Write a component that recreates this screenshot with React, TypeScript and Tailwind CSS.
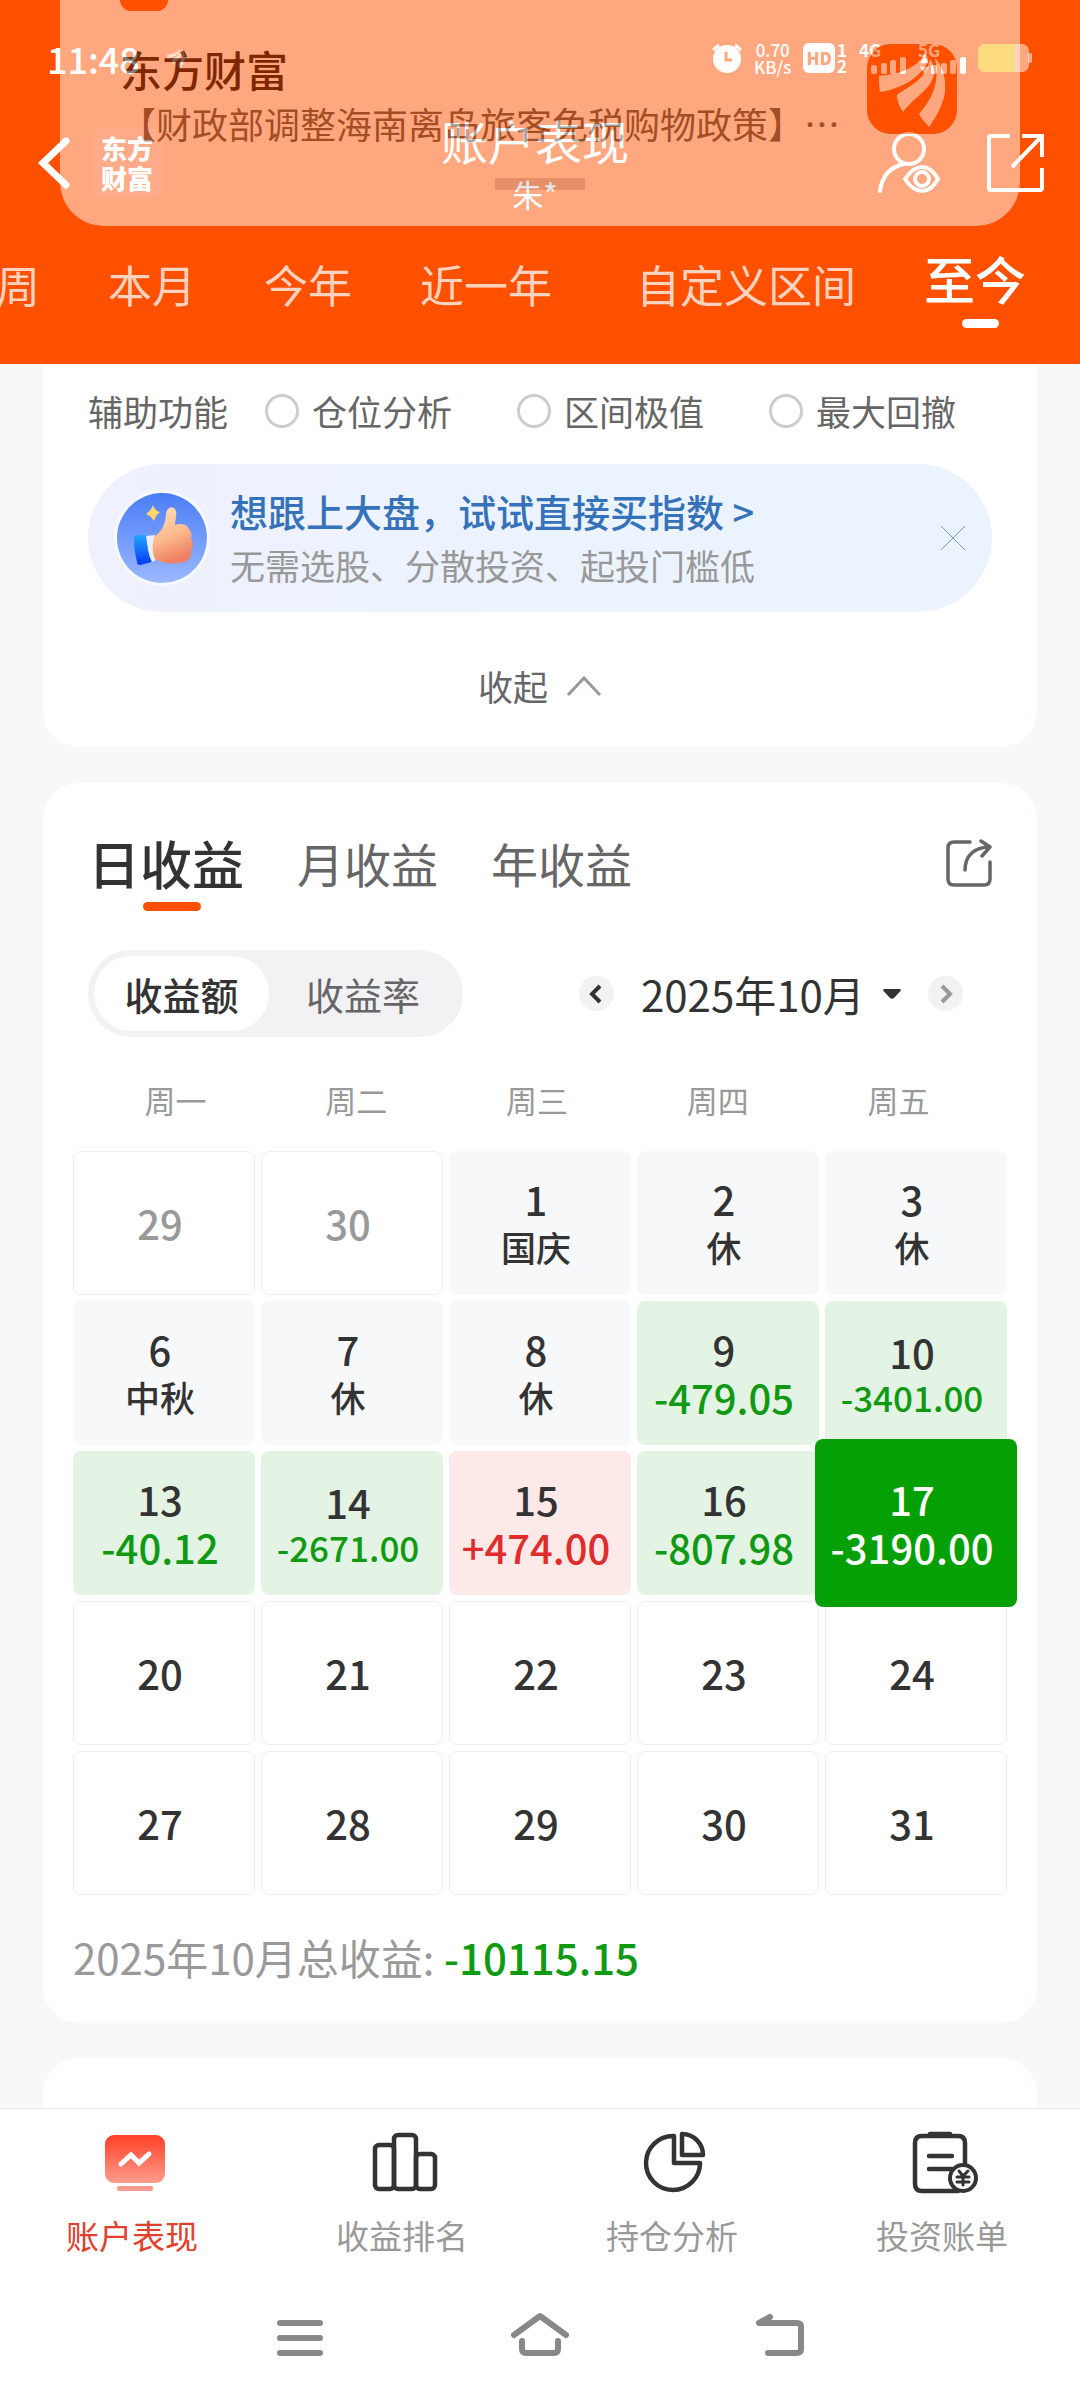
import { useState } from "react";
import clsx from "clsx";

type Tone = "muted" | "plain" | "holiday" | "loss" | "gain";

interface Day {
  date: number;
  tone: Tone;
  note?: string;
}

const ranges = ["本周", "本月", "今年", "近一年", "自定义区间", "至今"];
const helpers = ["仓位分析", "区间极值", "最大回撤"];
const periods = ["日收益", "月收益", "年收益"];
const weekdays = ["周一", "周二", "周三", "周四", "周五"];

const days: Day[] = [
  { date: 29, tone: "muted" },
  { date: 30, tone: "muted" },
  { date: 1, tone: "holiday", note: "国庆" },
  { date: 2, tone: "holiday", note: "休" },
  { date: 3, tone: "holiday", note: "休" },
  { date: 6, tone: "holiday", note: "中秋" },
  { date: 7, tone: "holiday", note: "休" },
  { date: 8, tone: "holiday", note: "休" },
  { date: 9, tone: "loss", note: "-479.05" },
  { date: 10, tone: "loss", note: "-3401.00" },
  { date: 13, tone: "loss", note: "-40.12" },
  { date: 14, tone: "loss", note: "-2671.00" },
  { date: 15, tone: "gain", note: "+474.00" },
  { date: 16, tone: "loss", note: "-807.98" },
  { date: 17, tone: "loss", note: "-3190.00" },
  { date: 20, tone: "plain" },
  { date: 21, tone: "plain" },
  { date: 22, tone: "plain" },
  { date: 23, tone: "plain" },
  { date: 24, tone: "plain" },
  { date: 27, tone: "plain" },
  { date: 28, tone: "plain" },
  { date: 29, tone: "plain" },
  { date: 30, tone: "plain" },
  { date: 31, tone: "plain" },
];

const cellTone: Record<Tone, string> = {
  muted: "border border-[#eeeeee] text-[#999999]",
  plain: "border border-[#eeeeee] text-[#333333]",
  holiday: "bg-[#f7f8fa] text-[#333333]",
  loss: "bg-[#e4f4e4] text-[#333333]",
  gain: "bg-[#fde9e8] text-[#333333]",
};

const noteTone: Record<Tone, string> = {
  muted: "",
  plain: "",
  holiday: "text-[#333333]",
  loss: "text-[#109a14]",
  gain: "text-[#e02c2c]",
};

const BrandMark = ({ className }: { className?: string }) => (
  <svg viewBox="0 0 90 90" className={className} aria-hidden="true">
    <path d="M12 32 C30 30 48 26 58 10 C60 12 61 14 61 17 C54 32 38 44 13 48 C12 43 12 37 12 32Z" />
    <path d="M63 15 C66 19 67 24 67 30 C64 46 48 52 36 68 C32 62 30 57 30 51 C40 43 60 36 63 15Z" />
    <path d="M68 14 C76 22 79 34 78 48 C76 62 68 74 62 83 C58 78 54 74 52 70 C62 58 74 42 68 14Z" />
  </svg>
);

const SignalBars = ({ className }: { className?: string }) => (
  <svg viewBox="0 0 35 17" className={className} fill="currentColor" aria-hidden="true">
    <rect x="0" y="8" width="6" height="9" rx="2" />
    <rect x="10" y="6" width="6" height="11" rx="2" />
    <rect x="19" y="3" width="6" height="14" rx="2" />
    <rect x="29" y="0" width="6" height="17" rx="2" />
  </svg>
);

const StatusBar = () => (
  <div className="flex items-center justify-between pt-[38px] pr-12 pl-[47px] text-white">
    <div className="flex items-center gap-6">
      <span className="text-[36px] leading-[40px] font-medium">11:48</span>
      <BrandMark className="h-6 w-6 fill-white/60" />
    </div>
    <div className="flex items-center gap-3">
      <svg viewBox="0 0 30 30" className="h-[30px] w-[30px]" fill="none" aria-hidden="true">
        <circle cx="15" cy="16" r="14" fill="white" />
        <path d="M1 7 L7 2 M29 7 L23 2" stroke="white" strokeWidth="3" />
        <path d="M14 9 V17 H20" stroke="#ff5000" strokeWidth="3" />
      </svg>
      <div className="text-center text-[17px] leading-[17px] font-medium">
        <div>0.70</div>
        <div>KB/s</div>
      </div>
      <div className="flex items-center gap-0.5">
        <span className="rounded-md bg-white px-[3px] text-[17px] leading-[30px] font-black text-[#ff5000]">HD</span>
        <div className="text-[17px] leading-[16px] font-bold">
          <div>1</div>
          <div>2</div>
        </div>
      </div>
      <div className="w-[47px]">
        <div className="text-[17px] leading-[15px] font-bold">4G</div>
        <SignalBars className="ml-3 h-[17px] w-[35px]" />
      </div>
      <div className="w-12">
        <div className="text-[17px] leading-[15px] font-bold">5G</div>
        <div className="flex items-end gap-0.5">
          <svg viewBox="0 0 10 20" className="-mt-1 ml-0.5 h-[18px] w-[9px]" fill="currentColor" aria-hidden="true">
            <path d="M5 0 L10 8 H0Z M5 20 L10 12 H0Z" />
          </svg>
          <SignalBars className="h-[17px] w-[35px]" />
        </div>
      </div>
      <svg viewBox="0 0 54 28" className="h-7 w-[54px]" aria-hidden="true">
        <rect width="51" height="28" rx="7" fill="white" fillOpacity="0.5" />
        <rect x="50" y="9" width="4" height="10" rx="1" fill="white" fillOpacity="0.5" />
        <path d="M7 0 H37 V28 H7 A7 7 0 0 1 0 21 V7 A7 7 0 0 1 7 0Z" fill="#fbb900" />
      </svg>
    </div>
  </div>
);

const TitleBar = () => (
  <div className="mt-9 grid grid-cols-[1fr_auto_1fr] items-center pr-9 pl-[26px] text-white">
    <div className="flex items-center gap-2.5">
      <button aria-label="返回">
        <svg viewBox="0 0 56 56" className="h-14 w-14" fill="none" stroke="white" strokeWidth="7" strokeLinecap="round">
          <path d="M40 6 L17 28 L40 50" />
        </svg>
      </button>
      <div className="rounded-xl bg-[#ff6a50]/20 px-[9px] py-[5px] text-[26px] leading-[30px] font-black">
        <div>东方</div>
        <div>财富</div>
      </div>
    </div>
    <div className="text-center">
      <h1 className="text-[47px] leading-[52px]">账户表现</h1>
      <p className="mt-2.5 text-[31px] leading-9">朱*</p>
    </div>
    <div className="flex items-center justify-end gap-[46px]">
      <button aria-label="查看账户">
        <svg viewBox="0 0 62 62" className="h-[62px] w-[62px]" fill="none" stroke="white" strokeWidth="4" strokeLinecap="round">
          <circle cx="31" cy="17" r="15" />
          <path d="M2 59 C4 44 12 35 26 32" />
          <path d="M27 47 C33 38 38 35 44 35 C50 35 55 38 60 47 C55 56 50 59 44 59 C38 59 33 56 27 47Z" />
          <circle cx="44" cy="47" r="7" />
        </svg>
      </button>
      <button aria-label="分享">
        <svg viewBox="0 0 58 60" className="h-[60px] w-[58px]" fill="none" stroke="white" strokeWidth="4">
          <path d="M24 3 H5 Q3 3 3 5 V55 Q3 57 5 57 H54 Q56 57 56 55 V35" />
          <path d="M36 3 H56 V24 M55 4 L26 34" />
        </svg>
      </button>
    </div>
  </div>
);

/* Heads-up message sliding away over the header */
const Notification = () => (
  <aside className="absolute inset-x-[60px] top-0 rounded-b-[44px] bg-white pb-9 opacity-50">
    <div className="flex items-start justify-between pr-[63px] pl-[60px]">
      <div className="min-w-0">
        <div className="h-[11px] w-12 rounded-b-[14px] bg-[#ff5000]" />
        <div className="mt-[30px] text-[42px] leading-[56px] font-medium text-black">东方财富</div>
        <p className="text-[36px] leading-[52px] text-[#4b4b4b]">【财政部调整海南离岛旅客免税购物政策】…</p>
        <div className="mt-[29px] ml-[375px] h-3 w-[90px] bg-[#cfcfcf]" />
      </div>
      <BrandMark className="mt-11 h-[90px] w-[90px] rounded-[24px] bg-[#ff5000] fill-white" />
    </div>
  </aside>
);

const RangeTabs = () => {
  const [active, setActive] = useState("至今");
  return (
    <nav className="flex justify-end gap-[68px] overflow-hidden pt-[34px] pr-[54px]">
      {ranges.map((range) => (
        <button
          key={range}
          onClick={() => setActive(range)}
          className={clsx(
            "flex shrink-0 flex-col items-center whitespace-nowrap",
            range === "近一年" && "mr-4",
            active === range ? "text-[51px] font-medium text-white" : "pt-1.5 text-[44px] text-[#ffd3bf]"
          )}
        >
          <span className="leading-[64px]">{range}</span>
          {active === range && <span className="mt-[9px] ml-3 h-[9px] w-[37px] rounded-full bg-white" />}
        </button>
      ))}
    </nav>
  );
};

const ThumbBadge = () => (
  <svg viewBox="0 0 96 96" className="h-24 w-24 shrink-0" aria-hidden="true">
    <defs>
      <linearGradient id="badge" x1="0" y1="0" x2="0" y2="1">
        <stop offset="0" stopColor="#4a7df6" />
        <stop offset="1" stopColor="#9bb8ff" />
      </linearGradient>
      <linearGradient id="hand" x1="0" y1="0" x2="0.3" y2="1">
        <stop offset="0" stopColor="#ffe0bb" />
        <stop offset="0.6" stopColor="#fdb98c" />
        <stop offset="1" stopColor="#ee8064" />
      </linearGradient>
      <linearGradient id="cuff" x1="0" y1="0" x2="0" y2="1">
        <stop offset="0" stopColor="#23a6ff" />
        <stop offset="1" stopColor="#0438f2" />
      </linearGradient>
    </defs>
    <circle cx="48" cy="48" r="48" fill="#f6faff" />
    <circle cx="48" cy="48" r="45" fill="url(#badge)" />
    <path d="M39 15 Q41 21 46 22 Q42 25 40 31 Q37 26 32 24 Q37 21 39 15Z" fill="#ffd76a" />
    <path d="M32 46 L41 45 L42 70 L36 73Z" fill="#e8eeff" />
    <path
      d="M40 47 C47 42 51 36 52 24 C53 16 60 15 62 21 C63 26 61 31 61 35 C67 33 73 34 75 39 C78 42 78 46 77 49 C80 53 79 58 77 61 C78 66 75 71 70 72 C60 75 47 73 41 69 C38 62 38 54 40 47Z"
      fill="url(#hand)"
    />
    <path d="M20 48 Q20 45 23 45 L32 45 C33 55 34 64 38 72 L26 75 Q23 75 23 72 C21 64 20 56 20 48Z" fill="url(#cuff)" />
  </svg>
);

const ToolsCard = () => {
  const [showBanner, setShowBanner] = useState(true);
  return (
    <section className="rounded-b-[36px] bg-white px-[45px] pt-6 pb-[38px] text-[35px] text-[#666666]">
      <div className="flex items-center leading-[46px]">
        <span className="mr-[37px]">辅助功能</span>
        <div className="flex gap-[65px]">
          {helpers.map((helper) => (
            <label key={helper} className="flex items-center gap-[13px]">
              <input
                type="radio"
                name="helper"
                className="h-[34px] w-[34px] appearance-none rounded-full border-[3px] border-[#cccccc] checked:border-[#ff5000]"
              />
              {helper}
            </label>
          ))}
        </div>
      </div>

      {showBanner && (
        <div className="mt-[30px] flex items-center rounded-full bg-linear-to-r from-[#eff1fd] to-[#ebf3ff] to-50% py-5 pr-[27px] pl-[26px]">
          <ThumbBadge />
          <a href="#index-fund" className="ml-5 flex-1">
            <div className="text-[38px] leading-[54px] font-medium text-[#3572ba]">想跟上大盘，试试直接买指数 &gt;</div>
            <div className="leading-[54px] text-[#999999]">无需选股、分散投资、起投门槛低</div>
          </a>
          <button aria-label="关闭" onClick={() => setShowBanner(false)}>
            <svg viewBox="0 0 24 24" className="h-6 w-6" stroke="#6c9ad2" strokeWidth="1">
              <path d="M0 0 L24 24 M24 0 L0 24" />
            </svg>
          </button>
        </div>
      )}

      <button className="mx-auto mt-[51px] flex items-center gap-[18px] leading-[46px]">
        收起
        <svg viewBox="0 0 36 22" className="h-[22px] w-9" fill="none" stroke="#999999" strokeWidth="3">
          <path d="M2 20 L18 3 L34 20" />
        </svg>
      </button>
    </section>
  );
};

const DayCell = ({ day, selected, onSelect }: { day: Day; selected: boolean; onSelect: () => void }) => {
  const long = !!day.note && day.note.length > 7 && !selected;
  return (
    <button
      onClick={onSelect}
      className={clsx(
        "flex flex-col items-center justify-center rounded-lg pr-2 text-[40px] leading-[48px] font-medium",
        selected ? "z-10 -mx-2.5 -my-3 bg-[#05a005] text-white" : cellTone[day.tone]
      )}
    >
      <span>{day.date}</span>
      {day.note && (
        <span
          className={clsx(
            !selected && noteTone[day.tone],
            long && "text-[35px] leading-[42px]",
            day.tone === "holiday" && "text-[35px]"
          )}
        >
          {day.note}
        </span>
      )}
    </button>
  );
};

const EarningsCard = () => {
  const [period, setPeriod] = useState("日收益");
  const [mode, setMode] = useState("收益额");
  const [selected, setSelected] = useState(14);

  return (
    <section className="mt-9 rounded-[36px] bg-white px-[30px] pt-[50px] pb-9">
      <div className="flex items-start justify-between px-[15px]">
        <div className="flex gap-[53px]">
          {periods.map((item) => (
            <button
              key={item}
              onClick={() => setPeriod(item)}
              className={clsx(
                "flex flex-col items-center",
                period === item ? "text-[52px] font-medium text-[#333333]" : "text-[47px] text-[#666666]"
              )}
            >
              <span className="leading-[60px]">{item}</span>
              <span className={clsx("mt-[9px] ml-3 h-[9px] w-[58px] rounded-full", period === item && "bg-[#ff5000]")} />
            </button>
          ))}
        </div>
        <button aria-label="分享收益" className="mt-1.5">
          <svg
            viewBox="0 0 46 48"
            className="h-12 w-[46px]"
            fill="none"
            stroke="#666666"
            strokeWidth="3.5"
            strokeLinecap="round"
            strokeLinejoin="round"
          >
            <path d="M24 3 H8 Q2 3 2 9 V40 Q2 46 8 46 H38 Q44 46 44 40 V23" />
            <path d="M19 31 C19 17 28 8 44 8 M35 2 L44 8 L36 17" />
          </svg>
        </button>
      </div>

      <div className="mt-[39px] flex items-center justify-between px-[15px]">
        <div className="flex rounded-full bg-[#f2f2f5] p-1.5 text-[38px] leading-[75px]">
          <button
            onClick={() => setMode("收益额")}
            className={clsx(
              "w-[175px] rounded-full",
              mode === "收益额" ? "bg-white font-medium text-[#333333]" : "text-[#666666]"
            )}
          >
            收益额
          </button>
          <button
            onClick={() => setMode("收益率")}
            className={clsx(
              "w-[188px] rounded-full",
              mode === "收益率" ? "bg-white font-medium text-[#333333]" : "text-[#666666]"
            )}
          >
            收益率
          </button>
        </div>
        <div className="mr-[29px] flex items-center gap-[27px]">
          <button aria-label="上个月" className="rounded-full bg-[#f2f2f5]">
            <svg viewBox="0 0 35 35" className="h-[35px] w-[35px]" fill="none" stroke="#333333" strokeWidth="4">
              <path d="M21 10 L13 18 L21 26" />
            </svg>
          </button>
          <label className="flex items-center gap-[18px]">
            <select aria-label="月份" className="appearance-none text-[42px] leading-[54px] text-[#333333]">
              <option>2025年10月</option>
            </select>
            <svg viewBox="0 0 18 10" className="h-2.5 w-[18px]" fill="#333333" aria-hidden="true">
              <path d="M1 0 H17 Q18.500 0.500 17.500 2 L11 9 Q9 10.500 7 9 L0.500 2 Q-0.500 0.500 1 0Z" />
            </svg>
          </label>
          <button aria-label="下个月" className="rounded-full bg-[#f2f2f5]">
            <svg viewBox="0 0 35 35" className="h-[35px] w-[35px]" fill="none" stroke="#999999" strokeWidth="4">
              <path d="M14 10 L22 18 L14 26" />
            </svg>
          </button>
        </div>
      </div>

      <div className="mt-[43px] grid grid-cols-5 pr-[18px] pl-3 text-center text-[31px] leading-10 text-[#999999]">
        {weekdays.map((weekday) => (
          <span key={weekday}>{weekday}</span>
        ))}
      </div>
      <div className="mt-[31px] grid auto-rows-[144px] grid-cols-5 gap-1.5">
        {days.map((day, index) => (
          <DayCell key={index} day={day} selected={index === selected} onSelect={() => setSelected(index)} />
        ))}
      </div>

      <p className="mt-8 text-[42px] leading-[60px] text-[#999999]">
        2025年10月总收益: <span className="font-medium text-[#109a14]">-10115.15</span>
      </p>
    </section>
  );
};

const navIcons = {
  账户表现: (
    <svg viewBox="0 0 66 64" className="h-16 w-[66px]" fill="none">
      <defs>
        <linearGradient id="screen" x1="0" y1="0" x2="0" y2="1">
          <stop offset="0" stopColor="#ff4025" />
          <stop offset="1" stopColor="#ff9c8e" />
        </linearGradient>
      </defs>
      <rect x="3" y="4" width="60" height="48" rx="9" fill="url(#screen)" />
      <path d="M19 33 L29 24 L37 32 L47 23" stroke="white" strokeWidth="5" strokeLinecap="round" />
      <rect x="15" y="55" width="36" height="5" rx="2" fill="#f99a8e" />
    </svg>
  ),
  收益排名: (
    <svg viewBox="0 0 66 64" className="h-16 w-[66px]" fill="none" stroke="#333333" strokeWidth="4.5">
      <rect x="3" y="14" width="19" height="44" rx="4" />
      <rect x="22" y="4" width="22" height="54" rx="4" />
      <rect x="44" y="23" width="19" height="35" rx="4" />
    </svg>
  ),
  持仓分析: (
    <svg viewBox="0 0 66 64" className="h-16 w-[66px]" fill="none" stroke="#333333" strokeWidth="4.5" strokeLinejoin="round">
      <path d="M32 5 A27 27 0 1 0 58 32 H32Z" />
      <path d="M40 3 A21 21 0 0 1 61 24 H40Z" />
    </svg>
  ),
  投资账单: (
    <svg viewBox="0 0 66 64" className="h-16 w-[66px]" fill="none" stroke="#333333" strokeWidth="4.5" strokeLinecap="round">
      <path d="M46 60 H10 Q3 60 3 53 V12 Q3 5 10 5 H46 Q53 5 53 12 V32" />
      <path d="M18 3 H38 M17 25 H40 M17 38 H40" />
      <circle cx="51" cy="47" r="13" fill="white" strokeWidth="4" />
      <path d="M47 40 L51 45 L56 40 M51 45 V54 M45 46 H57 M45 51 H57" strokeWidth="3" />
    </svg>
  ),
};

const BottomNav = () => (
  <nav className="grid grid-cols-4 border-t border-[#e8e9eb] bg-white pt-[22px] pb-1.5">
    {Object.entries(navIcons).map(([name, icon], index) => (
      <a
        key={name}
        href={`#tab-${index}`}
        className={clsx(
          "flex flex-col items-center gap-[18px] text-[33px] leading-[44px]",
          index === 0 ? "text-[#e2402b]" : "text-[#999999]"
        )}
      >
        {icon}
        <span className="pr-1.5">{name}</span>
      </a>
    ))}
  </nav>
);

const SystemNav = () => (
  <div className="flex justify-center gap-[180px] bg-white pt-12 pb-[41px]">
    <button aria-label="最近任务">
      <svg viewBox="0 0 60 48" className="h-12 w-[60px]" stroke="#888888" strokeWidth="6" strokeLinecap="round">
        <path d="M10 12 H50 M10 27 H50 M10 42 H50" />
      </svg>
    </button>
    <button aria-label="主屏幕">
      <svg
        viewBox="0 0 60 48"
        className="h-12 w-[60px]"
        fill="none"
        stroke="#888888"
        strokeWidth="6"
        strokeLinecap="round"
        strokeLinejoin="round"
      >
        <path d="M4 24 L30 5 L56 24" />
        <path d="M12 30 V38 Q12 42 16 42 H44 Q48 42 48 38 V30" />
      </svg>
    </button>
    <button aria-label="系统返回">
      <svg
        viewBox="0 0 60 48"
        className="h-12 w-[60px]"
        fill="none"
        stroke="#888888"
        strokeWidth="6"
        strokeLinecap="round"
        strokeLinejoin="round"
      >
        <path d="M20 6 L9 12 H47 Q51 12 51 16 V38 Q51 42 47 42 H18" />
      </svg>
    </button>
  </div>
);

const App = () => {
  return (
    <div className="flex min-h-screen flex-col bg-[#f7f8fa] font-['Noto_Sans_CJK_SC','Noto_Sans',sans-serif]">
      <header className="relative bg-[#ff5000] pb-9">
        <StatusBar />
        <TitleBar />
        <RangeTabs />
        <Notification />
      </header>

      <main className="flex flex-1 flex-col px-[43px]">
        <ToolsCard />
        <EarningsCard />
        <section className="mt-[35px] flex-1 rounded-t-[36px] bg-white" />
      </main>

      <BottomNav />
      <SystemNav />
    </div>
  );
};

export default App;
